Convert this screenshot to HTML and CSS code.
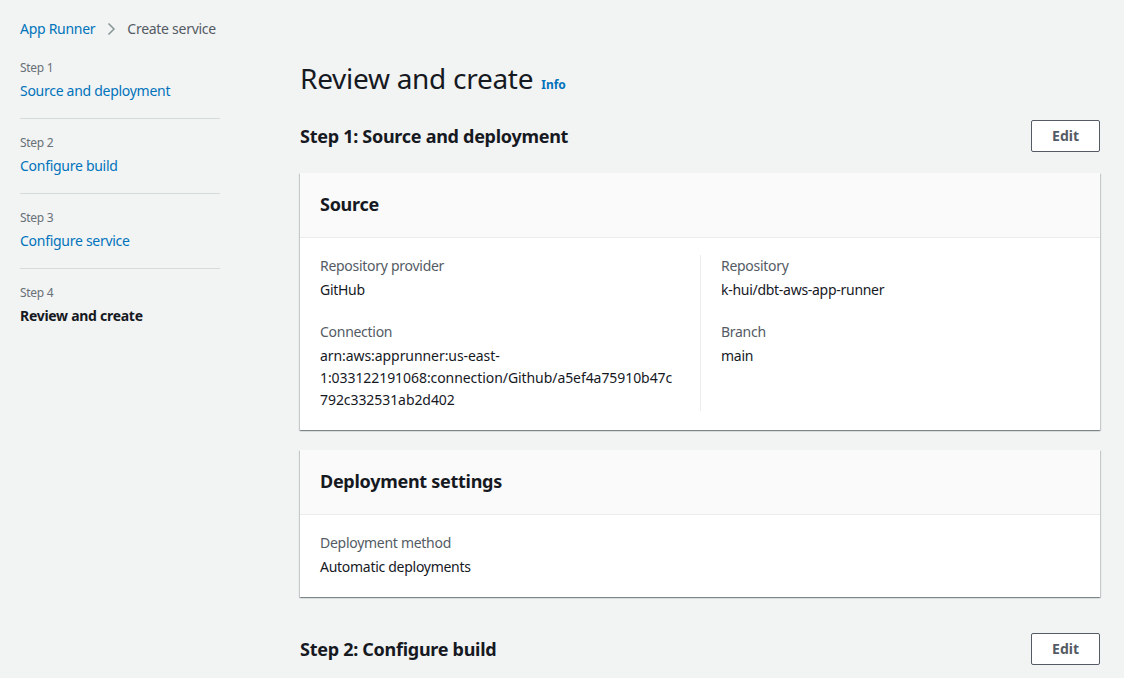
FILE: index.html
```html
<!DOCTYPE html>
<html lang="en">
<head>
<meta charset="utf-8">
<title>Review and create</title>
<link rel="stylesheet" href="styles.css">
</head>
<body>
<nav class="breadcrumbs">
  <a class="crumb-link" href="#">App Runner</a>
  <svg class="crumb-sep" width="16" height="16" viewBox="0 0 16 16"><path d="M5.5 2.5 L11 8 L5.5 13.5" fill="none" stroke="#879596" stroke-width="1.5"/></svg>
  <span class="crumb-current">Create service</span>
</nav>
<div class="layout">
  <aside class="steps">
    <div class="step">
      <div class="step-num">Step 1</div>
      <a class="step-link" href="#">Source and deployment</a>
    </div>
    <div class="step">
      <div class="step-num">Step 2</div>
      <a class="step-link" href="#">Configure build</a>
    </div>
    <div class="step">
      <div class="step-num">Step 3</div>
      <a class="step-link" href="#">Configure service</a>
    </div>
    <div class="step step-last">
      <div class="step-num">Step 4</div>
      <span class="step-current">Review and create</span>
    </div>
  </aside>
  <main class="main">
    <h1 class="page-title">Review and create <a class="info" href="#">Info</a></h1>

    <section class="section">
      <div class="section-head">
        <h2 class="section-title">Step 1: Source and deployment</h2>
        <button class="btn">Edit</button>
      </div>

      <div class="card">
        <div class="card-head"><h3 class="card-title">Source</h3></div>
        <div class="card-body cols">
          <div class="col">
            <div class="kv">
              <div class="key">Repository provider</div>
              <div class="val">GitHub</div>
            </div>
            <div class="kv">
              <div class="key">Connection</div>
              <div class="val val-code">arn:aws:apprunner:us-east-<br>1:033122191068:connection/Github/a5ef4a75910b47c<br>792c332531ab2d402</div>
            </div>
          </div>
          <div class="col col-right">
            <div class="kv">
              <div class="key">Repository</div>
              <div class="val">k-hui/dbt-aws-app-runner</div>
            </div>
            <div class="kv">
              <div class="key">Branch</div>
              <div class="val">main</div>
            </div>
          </div>
        </div>
      </div>

      <div class="card">
        <div class="card-head"><h3 class="card-title">Deployment settings</h3></div>
        <div class="card-body">
          <div class="kv">
            <div class="key">Deployment method</div>
            <div class="val">Automatic deployments</div>
          </div>
        </div>
      </div>
    </section>

    <section class="section">
      <div class="section-head">
        <h2 class="section-title">Step 2: Configure build</h2>
        <button class="btn">Edit</button>
      </div>
    </section>
  </main>
</div>
</body>
</html>
```
FILE: styles.css
```css
* { box-sizing: border-box; }
html, body { margin: 0; padding: 0; }
body {
  background: #f2f3f3;
  font-family: "Noto Sans", "Open Sans", Arial, sans-serif;
  font-size: 14px;
  line-height: 22px;
  letter-spacing: -0.02em;
  color: #16191f;
  overflow: hidden;
}
a { text-decoration: none; }

.breadcrumbs {
  display: flex;
  align-items: center;
  padding: 18px 20px 0;
  height: 40px;
}
.crumb-link { color: #0073bb; }
.crumb-sep { margin: 0 8px 0 8px; }
.crumb-current { color: #545b64; }

.layout {
  display: grid;
  grid-template-columns: 200px 800px;
  column-gap: 80px;
  padding: 20px 24px 0 20px;
}

.step {
  padding: 16px 0 16px;
  border-bottom: 1px solid #d5dbdb;
}
.step:first-child { padding-top: 0; }
.step-last { border-bottom: none; }
.step-num {
  font-size: 12px;
  line-height: 16px;
  color: #687078;
  margin-bottom: 4px;
}
.step-link { color: #0073bb; display: block; }
.step-current { font-weight: 700; display: block; }

.page-title {
  margin: 0 0 24px;
  font-size: 28px;
  line-height: 36px;
  height: 36px;
  font-weight: 400;
  color: #16191f;
}
.info {
  display: inline-block;
  font-size: 12px;
  line-height: 16px;
  font-weight: 700;
  letter-spacing: 0;
  color: #0073bb;
  margin-left: 1px;
  vertical-align: baseline;
}

.section { margin-bottom: 36px; }
.section-head {
  display: flex;
  align-items: center;
  justify-content: space-between;
  height: 32px;
  margin-bottom: 21px;
}
.section-title {
  margin: 0;
  font-size: 18px;
  line-height: 22px;
  font-weight: 700;
}
.btn {
  font-family: inherit;
  font-size: 14px;
  line-height: 22px;
  font-weight: 700;
  letter-spacing: 0;
  color: #545b64;
  background: #ffffff;
  border: 1px solid #545b64;
  border-radius: 2px;
  padding: 4px 20px;
  height: 32px;
}

.card {
  background: #ffffff;
  box-shadow: 0 1px 1px 0 rgba(0, 28, 36, 0.3), 1px 1px 1px 0 rgba(0, 28, 36, 0.15), -1px 1px 1px 0 rgba(0, 28, 36, 0.15);
  margin-bottom: 20px;
}
.card-head {
  background: #fafafa;
  border-bottom: 1px solid #eaeded;
  padding: 20px 20px 22px;
}
.card-title {
  margin: 0;
  font-size: 18px;
  line-height: 22px;
  font-weight: 700;
}
.card-body { padding: 17px 20px 19px; }
.cols {
  display: grid;
  grid-template-columns: 1fr 1fr;
}
.col { display: flex; flex-direction: column; gap: 20px; padding-right: 20px; }
.col-right { border-left: 1px solid #eaeded; padding-left: 20px; }
.key { color: #545b64; margin-bottom: 2px; }
.val { color: #16191f; }
.val-code { letter-spacing: -0.005em; }
```
